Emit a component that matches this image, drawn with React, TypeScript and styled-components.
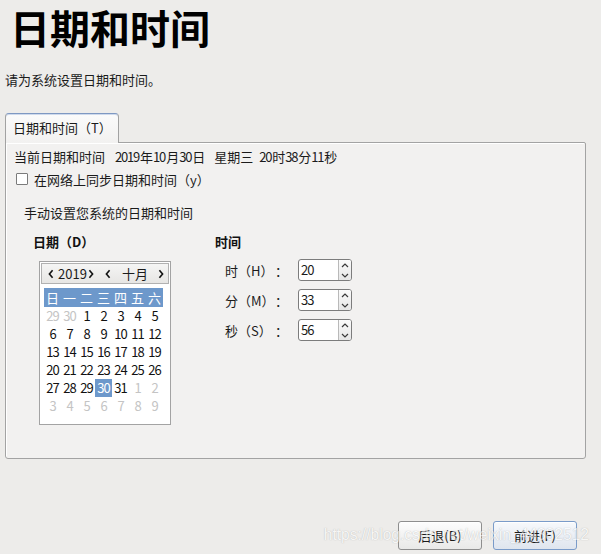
import React from "react";
import styled, { createGlobalStyle } from "styled-components";

const Global = createGlobalStyle`
  html, body { margin: 0; padding: 0; background: #edecea; }
  body {
    font-family: "Noto Sans CJK SC", "Noto Sans", sans-serif;
    color: #1b1b1b;
    font-size: 13px;
  }
  * { box-sizing: border-box; }
`;

const Page = styled.div`
  position: relative;
  width: 601px;
  height: 554px;
  display: flex;
  flex-direction: column;
  overflow: hidden;
`;

const Title = styled.h1`
  margin: 5px 0 0 10px;
  font-size: 40px;
  line-height: 44px;
  font-weight: 700;
  color: #000;
`;

const Subtitle = styled.div`
  margin: 23px 0 0 5px;
  line-height: 16px;
`;

const TabArea = styled.div`
  margin-top: 25px;
  padding: 0 15px 0 5px;
  display: flex;
  flex-direction: column;
`;

const Tab = styled.div`
  position: relative;
  z-index: 1;
  width: 114px;
  height: 30px;
  margin-bottom: -1px;
  padding-left: 7px;
  line-height: 28px;
  border: 1px solid #a2a2a2;
  border-top-color: #7e98c2;
  border-bottom: none;
  border-radius: 4px 4px 0 0;
  background: linear-gradient(#fbfbfb, #f2f1f0);
  box-shadow: inset 0 1px 0 #cfdaec;
`;

const Panel = styled.div`
  height: 317px;
  border: 1px solid #a3a3a3;
  border-radius: 0 2px 3px 3px;
  background: #f2f1f0;
  box-shadow: inset 1px 1px 0 #fff;
  padding: 6px 8px 0 8px;
  display: flex;
  flex-direction: column;
`;

const Line = styled.div`
  line-height: 16px;
  white-space: nowrap;
`;

const Num = styled.span`
  letter-spacing: -1.2px;
  margin-right: 1px;
`;

const Gap = styled.span<{ $w: number }>`
  display: inline-block;
  width: ${(p) => p.$w}px;
`;

const CheckRow = styled.label`
  margin: 6px 0 0 2px;
  display: flex;
  align-items: center;
  gap: 6px;
  height: 16px;
`;

const CheckBox = styled.span`
  width: 12px;
  height: 12px;
  border: 1px solid #7b7b7b;
  border-radius: 1px;
  background: #fff;
`;

const Manual = styled(Line)`
  margin: 18px 0 0 10px;
`;

const Columns = styled.div`
  margin: 13px 0 0 19px;
  display: flex;
`;

const DateCol = styled.div`
  width: 182px;
  display: flex;
  flex-direction: column;
`;

const Heading = styled.div`
  font-weight: 700;
  line-height: 16px;
  color: #111;
`;

const Calendar = styled.div`
  margin: 11px 0 0 6px;
  width: 132px;
  height: 164px;
  border: 1px solid #a3a3a3;
  background: #fff;
  padding: 1px;
  display: flex;
  flex-direction: column;
`;

const CalHeader = styled.div`
  height: 21px;
  border: 1px solid #b1b1b1;
  background: linear-gradient(#f5f5f4, #e7e6e4);
  display: flex;
  align-items: center;
  line-height: 19px;
  padding: 0 4px 0 5px;
`;

const HeadText = styled.span<{ $ml: number }>`
  margin-left: ${(p) => p.$ml}px;
`;

const ChevBox = styled.span<{ $ml: number; $auto?: boolean }>`
  display: flex;
  margin-left: ${(p) => (p.$auto ? "auto" : `${p.$ml}px`)};
`;

const Grid = styled.div`
  margin: 4px 0 0 3px;
  display: grid;
  grid-template-columns: repeat(7, 17px);
  grid-template-rows: 19px repeat(6, 18px);
`;

const WeekDay = styled.div`
  background: #6d98cb;
  color: #fff;
  text-align: center;
  line-height: 19px;
`;

const Day = styled.div<{ $muted?: boolean; $sel?: boolean }>`
  text-align: center;
  line-height: 18px;
  letter-spacing: -1px;
  color: ${(p) => (p.$sel ? "#fff" : p.$muted ? "#c4c4c4" : "#111")};
  background: ${(p) => (p.$sel ? "#6d98cb" : "transparent")};
`;

const TimeCol = styled.div`
  display: flex;
  flex-direction: column;
`;

const SpinList = styled.div`
  margin-top: 9px;
  display: flex;
  flex-direction: column;
  gap: 8px;
`;

const SpinRow = styled.div`
  display: flex;
  align-items: center;
  height: 22px;
  padding-left: 10px;
`;

const SpinLabel = styled.span`
  width: 50px;
  white-space: nowrap;
`;

const Colon = styled.span`
  width: 23px;
`;

const SpinBox = styled.div`
  width: 54px;
  height: 22px;
  border: 1px solid #7c7c7c;
  border-radius: 3px;
  background: #fff;
  display: flex;
`;

const SpinValue = styled.span`
  flex: 1;
  padding-left: 2px;
  line-height: 20px;
  letter-spacing: -1px;
`;

const Stepper = styled.span`
  width: 13px;
  border-left: 1px solid #b9b9b9;
  border-radius: 0 2px 2px 0;
  background: linear-gradient(#fbfbfb, #e6e6e6);
  display: flex;
  flex-direction: column;
`;

const StepHalf = styled.span`
  flex: 1;
  display: flex;
  align-items: center;
  justify-content: center;
`;

const Footer = styled.div`
  margin-top: auto;
  display: flex;
  justify-content: flex-end;
  gap: 11px;
  padding: 0 24px 4px 0;
`;

const Button = styled.button<{ $primary?: boolean }>`
  width: 84px;
  height: 29px;
  padding: 0;
  font-family: inherit;
  font-size: 13px;
  color: #1b1b1b;
  border: 1px solid ${(p) => (p.$primary ? "#7a9bc9" : "#8e8e8e")};
  border-radius: 3px;
  background: ${(p) =>
    p.$primary
      ? "linear-gradient(#f7f9fc, #dfe5ee)"
      : "linear-gradient(#fdfdfd, #e9e9e8)"};
  box-shadow: inset 0 1px 0 #fff;
`;

const Watermark = styled.div`
  position: absolute;
  right: 12px;
  bottom: 10px;
  font-family: "Liberation Sans", Arial, sans-serif;
  font-size: 15.6px;
  line-height: 18px;
  color: #fff;
  opacity: 0.55;
  text-shadow: 0 0 1px rgba(100, 100, 100, 0.8);
  pointer-events: none;
  white-space: nowrap;
`;

const Chev = ({ dir }: { dir: "l" | "r" }) => (
  <svg width="6" height="10" viewBox="0 0 6 10">
    <path
      d={dir === "l" ? "M4.6 1.2 L1.4 5 L4.6 8.8" : "M1.4 1.2 L4.6 5 L1.4 8.8"}
      stroke="#111"
      strokeWidth="1.6"
      fill="none"
    />
  </svg>
);

const Arrow = ({ up }: { up?: boolean }) => (
  <svg width="8" height="5" viewBox="0 0 8 5">
    <path
      d={up ? "M1 4 L4 1 L7 4" : "M1 1 L4 4 L7 1"}
      stroke="#3a3a3a"
      strokeWidth="1.2"
      fill="none"
    />
  </svg>
);

const weekdays = ["日", "一", "二", "三", "四", "五", "六"];

type Cell = { d: number; muted?: boolean; sel?: boolean };
const days: Cell[] = [
  { d: 29, muted: true },
  { d: 30, muted: true },
  ...Array.from({ length: 31 }, (_, i) => ({ d: i + 1, sel: i + 1 === 30 })),
  ...Array.from({ length: 9 }, (_, i) => ({ d: i + 1, muted: true })),
];

const spins = [
  { label: "时", key: "H", value: "20" },
  { label: "分", key: "M", value: "33" },
  { label: "秒", key: "S", value: "56" },
];

export default function App() {
  return (
    <Page>
      <Global />
      <Title>日期和时间</Title>
      <Subtitle>请为系统设置日期和时间。</Subtitle>
      <TabArea>
        <Tab>日期和时间（T）</Tab>
        <Panel>
          <Line>
            当前日期和时间
            <Gap $w={10} />
            <Num>2019</Num>年<Num>10</Num>月<Num>30</Num>日
            <Gap $w={9} />
            星期三
            <Gap $w={6} />
            <Num>20</Num>时<Num>38</Num>分<Num>11</Num>秒
          </Line>
          <CheckRow>
            <CheckBox />
            <span>在网络上同步日期和时间（y）</span>
          </CheckRow>
          <Manual>手动设置您系统的日期和时间</Manual>
          <Columns>
            <DateCol>
              <Heading>日期（D）</Heading>
              <Calendar>
                <CalHeader>
                  <ChevBox $ml={1}>
                    <Chev dir="l" />
                  </ChevBox>
                  <HeadText $ml={4}>2019</HeadText>
                  <ChevBox $ml={1}>
                    <Chev dir="r" />
                  </ChevBox>
                  <ChevBox $ml={11}>
                    <Chev dir="l" />
                  </ChevBox>
                  <HeadText $ml={11}>十月</HeadText>
                  <ChevBox $ml={0} $auto>
                    <Chev dir="r" />
                  </ChevBox>
                </CalHeader>
                <Grid>
                  {weekdays.map((w) => (
                    <WeekDay key={w}>{w}</WeekDay>
                  ))}
                  {days.map((c, i) => (
                    <Day key={i} $muted={c.muted} $sel={c.sel}>
                      {c.d}
                    </Day>
                  ))}
                </Grid>
              </Calendar>
            </DateCol>
            <TimeCol>
              <Heading>时间</Heading>
              <SpinList>
                {spins.map((s) => (
                  <SpinRow key={s.key}>
                    <SpinLabel>
                      {s.label}（{s.key}）
                    </SpinLabel>
                    <Colon>：</Colon>
                    <SpinBox>
                      <SpinValue>{s.value}</SpinValue>
                      <Stepper>
                        <StepHalf>
                          <Arrow up />
                        </StepHalf>
                        <StepHalf>
                          <Arrow />
                        </StepHalf>
                      </Stepper>
                    </SpinBox>
                  </SpinRow>
                ))}
              </SpinList>
            </TimeCol>
          </Columns>
        </Panel>
      </TabArea>
      <Footer>
        <Button>后退(B)</Button>
        <Button $primary>前进(F)</Button>
      </Footer>
      <Watermark>https://blog.csdn.net/weixin_44382512</Watermark>
    </Page>
  );
}
